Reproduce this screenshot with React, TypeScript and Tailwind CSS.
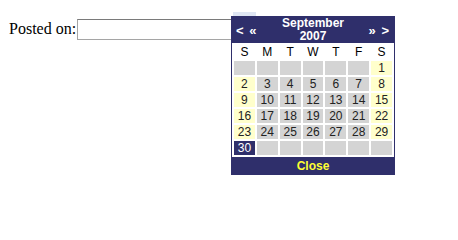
import React from 'react';

const weekdays = ['S', 'M', 'T', 'W', 'T', 'F', 'S'];

// September 2007 starts on a Saturday
const cells: (number | null)[] = [
  ...Array(6).fill(null),
  ...Array.from({ length: 30 }, (_, i) => i + 1),
  ...Array(6).fill(null),
];

function DayCell({ day, col }: { day: number | null; col: number }) {
  const weekend = col === 0 || col === 6;
  let cls = 'bg-[#d4d4d4] text-[#222]';
  if (day === 30) {
    cls = 'bg-[#2f2f6b] text-white';
  } else if (day !== null && weekend) {
    cls = 'bg-[#ffffcc] text-[#222]';
  }
  return (
    <div className={`flex h-[14px] items-center justify-center text-[12px] leading-none ${cls}`}>
      {day ?? ''}
    </div>
  );
}

export default function App() {
  return (
    <div className="relative h-[235px] w-[458px] bg-white">
      <div className="flex items-center gap-[1px] pt-[17px] pl-[9px]">
        <span className="text-[16px] text-black" style={{ fontFamily: '"Liberation Serif", serif' }}>
          Posted on:
        </span>
        <input
          type="text"
          className="h-[21px] w-[178px] border border-[#a5a5a5] border-t-[#7a7a7a] bg-white outline-none"
        />
      </div>

      {/* button peeking out behind the popup */}
      <div className="absolute top-[12px] left-[233px] h-[5px] w-[23px] bg-[#dfe6f3]" />

      {/* calendar popup */}
      <div
        className="absolute top-[16px] left-[231px] w-[164px] border border-[#2f2f6b] bg-white"
        style={{ fontFamily: '"Liberation Sans", Arial, sans-serif' }}
      >
        <div className="flex h-[26px] items-center justify-between bg-[#2f2f6b] px-[4px] font-bold text-white">
          <span className="w-[22px] text-[13px] leading-none tracking-[1px]">&lt; «</span>
          <div className="text-center text-[12px] leading-[13px]">
            <div>September</div>
            <div>2007</div>
          </div>
          <span className="w-[22px] text-right text-[13px] leading-none tracking-[1px]">» &gt;</span>
        </div>

        <div className="grid grid-cols-7 gap-x-[2px] px-[2px] pt-[2px]">
          {weekdays.map((w, i) => (
            <div key={i} className="flex h-[14px] items-center justify-center text-[12px] leading-none text-black">
              {w}
            </div>
          ))}
        </div>

        <div className="grid grid-cols-7 gap-[2px] p-[2px]">
          {cells.map((d, i) => (
            <DayCell key={i} day={d} col={i % 7} />
          ))}
        </div>

        <div className="flex h-[17px] items-center justify-center bg-[#2f2f6b] text-[12px] font-bold text-[#ffff33]">
          Close
        </div>
      </div>
    </div>
  );
}
